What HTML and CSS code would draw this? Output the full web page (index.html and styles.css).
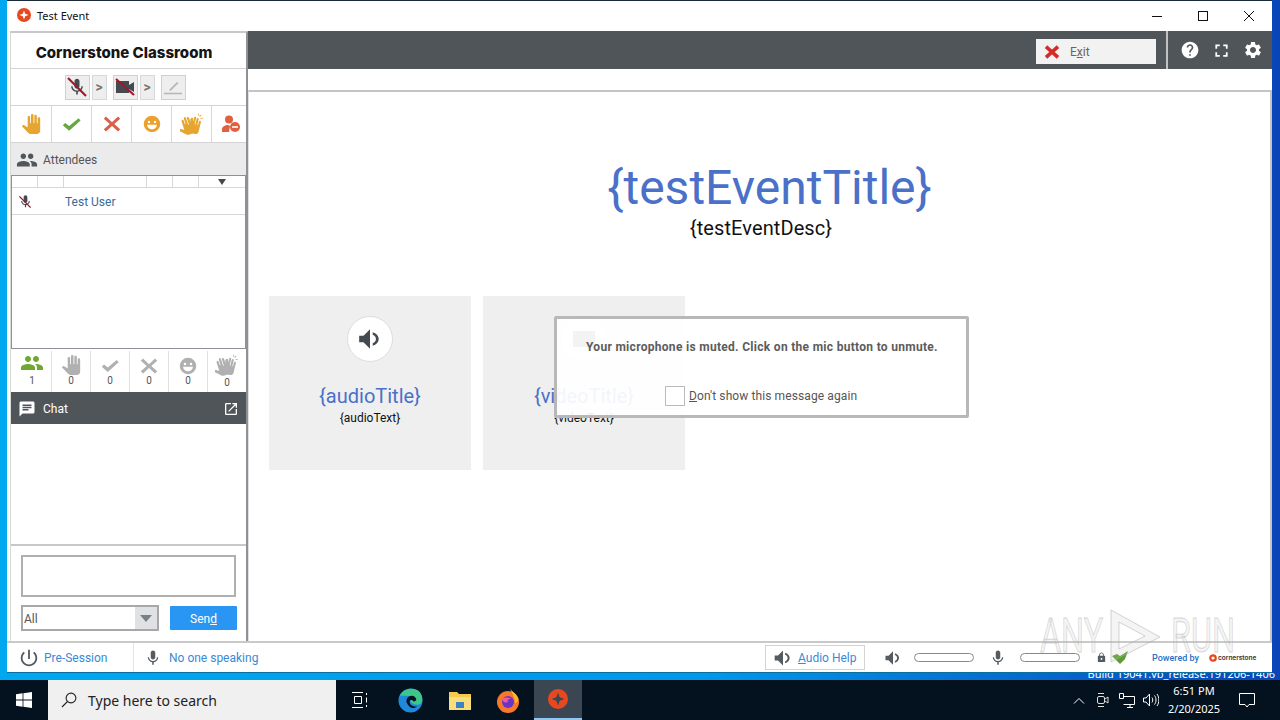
FILE: index.html
```html
<!DOCTYPE html>
<html lang="en">
<head>
	<meta charset="UTF-8">
	<title>Test Event</title>
	<link rel="stylesheet" href="styles.css">
</head>
<body>
<svg class="defs" width="0" height="0">
	<symbol id="i-hand" viewBox="0 0 24 24"><path d="M23 5.5V20c0 2.2-1.8 4-4 4h-7.3c-1.08 0-2.1-.43-2.85-1.19L1 14.83s1.26-1.23 1.3-1.25c.22-.19.49-.29.79-.29.22 0 .42.06.6.16.04.01 4.31 2.46 4.31 2.46V4c0-.83.67-1.5 1.5-1.5S11 3.17 11 4v7h1V1.5c0-.83.67-1.5 1.5-1.5S15 .67 15 1.5V11h1V2.5c0-.83.67-1.5 1.5-1.5s1.5.67 1.5 1.5V11h1V5.5c0-.83.67-1.5 1.5-1.5s1.5.67 1.5 1.5z"/></symbol>
	<symbol id="i-check" viewBox="0 0 24 24"><path d="M1 13l3-3 5 4L21 4l2.5 3L9 20z"/></symbol>
	<symbol id="i-cross" viewBox="0 0 24 24"><path d="M4 2l8 7.500L20 2l3 3-8 7 8 7-3 3-8-7.500L4 22l-3-3 8-7-8-7z"/></symbol>
	<symbol id="i-face" viewBox="0 0 24 24"><path fill-rule="evenodd" d="M12 1a11 11 0 1 0 0 22 11 11 0 0 0 0-22zM8 7.500a1.700 1.700 0 1 1 0 3.400 1.700 1.700 0 0 1 0-3.400zm8 0a1.700 1.700 0 1 1 0 3.400 1.700 1.700 0 0 1 0-3.400zM5.500 13h13c0 3.600-2.900 6-6.500 6s-6.500-2.400-6.500-6z"/></symbol>
	<symbol id="i-clap" viewBox="0 0 24 24"><g transform="translate(-2 4) rotate(-18 12 12) scale(.75)"><path d="M23 5.5V20c0 2.2-1.8 4-4 4h-7.3c-1.08 0-2.1-.43-2.85-1.19L1 14.83s1.26-1.23 1.3-1.25c.22-.19.49-.29.79-.29.22 0 .42.06.6.16.04.01 4.31 2.46 4.31 2.46V4c0-.83.67-1.5 1.5-1.5S11 3.17 11 4v7h1V1.5c0-.83.67-1.5 1.5-1.5S15 .67 15 1.500V11h1V2.500c0-.83.67-1.5 1.5-1.5s1.5.67 1.5 1.5V11h1V5.5c0-.83.67-1.5 1.5-1.5s1.5.67 1.5 1.5z"/></g><g transform="translate(3 5) rotate(14 12 12) scale(.7)"><path d="M23 5.5V20c0 2.2-1.8 4-4 4h-7.3c-1.08 0-2.1-.43-2.85-1.19L1 14.83s1.26-1.23 1.3-1.25c.22-.19.49-.29.79-.29.22 0 .42.06.6.16.04.01 4.31 2.46 4.31 2.46V4c0-.83.67-1.5 1.5-1.5S11 3.17 11 4v7h1V1.5c0-.83.67-1.5 1.5-1.5S15 .67 15 1.500V11h1V2.500c0-.83.67-1.5 1.5-1.5s1.5.67 1.5 1.5V11h1V5.5c0-.83.67-1.5 1.5-1.5s1.5.67 1.5 1.5z"/></g><path d="M18.500 1.500l1 2.500-.7.300-1-2.500zM21.500 3l-1.500 2-.6-.4 1.500-2zM23 6.500l-2.500.5-.1-.8 2.500-.5z"/></symbol>
	<symbol id="i-group" viewBox="0 0 24 24"><path d="M16 11c1.66 0 2.99-1.34 2.99-3S17.66 5 16 5c-1.66 0-3 1.34-3 3s1.34 3 3 3zm-8 0c1.66 0 2.99-1.34 2.99-3S9.66 5 8 5C6.34 5 5 6.34 5 8s1.34 3 3 3zm0 2c-2.33 0-7 1.17-7 3.5V19h14v-2.5c0-2.33-4.67-3.5-7-3.5zm8 0c-.29 0-.62.02-.97.05 1.16.84 1.97 1.97 1.97 3.45V19h6v-2.5c0-2.33-4.67-3.5-7-3.5z"/></symbol>
	<symbol id="i-mic" viewBox="0 0 24 24"><path d="M12 14c1.66 0 2.99-1.34 2.99-3L15 5c0-1.66-1.34-3-3-3S9 3.34 9 5v6c0 1.66 1.34 3 3 3zm5.3-3c0 3-2.54 5.1-5.3 5.1S6.7 14 6.7 11H5c0 3.41 2.72 6.23 6 6.72V21h2v-3.28c3.28-.48 6-3.3 6-6.72h-1.7z"/></symbol>
	<symbol id="i-sound" viewBox="0 0 24 24"><path d="M2 9v6h4l6 6V3L6 9H2zm12.500-3.200v2.300c1.900.8 3 2.200 3 3.900s-1.100 3.100-3 3.900v2.300c3.200-.9 5.500-3.300 5.500-6.200s-2.300-5.300-5.500-6.200z"/></symbol>
</svg>

<div class="desktop">
	<div class="window">
		<header class="titlebar">
			<svg class="app-logo" width="14" height="14" viewBox="0 0 14 14"><circle cx="7" cy="7" r="7" fill="#e8481f"/><path d="M7 2.500l1.200 3.300L11.500 7 8.200 8.200 7 11.500 5.800 8.200 2.500 7l3.300-1.200z" fill="#fff"/></svg>
			<span class="titlebar-text">Test Event</span>
			<div class="win-btns">
				<svg width="46" height="30" viewBox="0 0 46 30"><path d="M18 15.500h10" stroke="#111" fill="none"/></svg>
				<svg width="46" height="30" viewBox="0 0 46 30"><rect x="18.500" y="10.500" width="9" height="9" stroke="#111" fill="none"/></svg>
				<svg width="46" height="30" viewBox="0 0 46 30"><path d="M18 10l10 10M28 10L18 20" stroke="#111" fill="none"/></svg>
			</div>
		</header>

		<div class="main">
			<aside class="side">
				<div class="brand">Cornerstone Classroom</div>
				<div class="tools">
					<span class="tool">
						<svg class="ic-dark" width="20" height="20"><use href="#i-mic"/></svg>
						<svg class="slash" width="24" height="24" viewBox="0 0 24 24"><path d="M3 3l18 18"/></svg>
					</span>
					<span class="tool-arrow">&gt;</span>
					<span class="tool">
						<svg width="20" height="14" viewBox="0 0 20 14"><path d="M1 1h13v12H1zM14 5l5-3v10l-5-3z" fill="#444a50"/></svg>
						<svg class="slash" width="24" height="24" viewBox="0 0 24 24"><path d="M3 4l18 16"/></svg>
					</span>
					<span class="tool-arrow">&gt;</span>
					<span class="tool tool-off">
						<svg width="20" height="16" viewBox="0 0 20 16"><path d="M1 14.500h18" stroke="#b5b5b5" stroke-width="1.500"/><path d="M6 11l8-8 1.500 1-8 8z" fill="#b5b5b5"/></svg>
					</span>
				</div>
				<div class="reactions">
					<span><svg class="c-hand" width="20" height="20"><use href="#i-hand"/></svg></span>
					<span><svg class="c-check" width="19" height="19"><use href="#i-check"/></svg></span>
					<span><svg class="c-cross" width="18" height="18"><use href="#i-cross"/></svg></span>
					<span><svg class="c-face" width="18" height="18"><use href="#i-face"/></svg></span>
					<span><svg class="c-hand" width="24" height="24"><use href="#i-clap"/></svg></span>
					<span>
						<svg width="20" height="18" viewBox="0 0 20 18"><circle cx="8" cy="4.500" r="4" fill="#e0603f"/><path d="M1 17v-3c0-2 3-4 6-4l2 1-1 6z" fill="#e0603f"/><circle cx="14" cy="12" r="5" fill="#e0603f"/><path d="M11 12h6" stroke="#fff" stroke-width="1.600"/></svg>
					</span>
				</div>
				<div class="att-head">
					<svg width="22" height="22"><use href="#i-group"/></svg>
					<span>Attendees</span>
				</div>
				<div class="att-list">
					<div class="att-cols">
						<span></span><span></span><span></span><span></span><span></span>
						<span class="sort-cell"><i class="sort-arrow"></i></span>
					</div>
					<div class="att-row">
						<span class="att-mic">
							<svg class="ic-dark" width="15" height="15"><use href="#i-mic"/></svg>
							<svg class="slash" width="15" height="15" viewBox="0 0 24 24"><path d="M3 3l18 18"/></svg>
						</span>
						<span class="att-name">Test User</span>
					</div>
				</div>
				<div class="counts">
					<div><svg class="c-green" width="24" height="24"><use href="#i-group"/></svg><b>1</b></div>
					<div><svg class="c-gray" width="20" height="20"><use href="#i-hand"/></svg><b>0</b></div>
					<div><svg class="c-gray" width="18" height="18"><use href="#i-check"/></svg><b>0</b></div>
					<div><svg class="c-gray" width="18" height="18"><use href="#i-cross"/></svg><b>0</b></div>
					<div><svg class="c-gray" width="18" height="18"><use href="#i-face"/></svg><b>0</b></div>
					<div class="count-clap"><svg class="c-gray" width="24" height="24"><use href="#i-clap"/></svg><b>0</b></div>
				</div>
				<div class="chat-head">
					<svg width="18" height="18" viewBox="0 0 24 24" fill="#fff"><path d="M20 2H4c-1.1 0-2 .9-2 2v18l4-4h14c1.1 0 2-.9 2-2V4c0-1.1-.9-2-2-2zM6 9h12v2H6V9zm8 5H6v-2h8v2zm4-6H6V6h12v2z"/></svg>
					<span>Chat</span>
					<svg class="popout" width="16" height="16" viewBox="0 0 24 24" fill="#fff"><path d="M19 19H5V5h7V3H5c-1.11 0-2 .9-2 2v14c0 1.1.89 2 2 2h14c1.1 0 2-.9 2-2v-7h-2v7zM14 3v2h3.59l-9.83 9.83 1.41 1.41L19 6.41V10h2V3h-7z"/></svg>
				</div>
				<div class="chat-log"></div>
				<div class="chat-form">
					<div class="chat-input"></div>
					<div class="chat-send">
						<div class="select">
							<span>All</span>
							<i class="select-btn"><i class="sort-arrow"></i></i>
						</div>
						<div class="send">Sen<u>d</u></div>
					</div>
				</div>
			</aside>

			<section class="content">
				<div class="topbar">
					<div class="exit">
						<svg class="c-red" width="14" height="14"><use href="#i-cross"/></svg>
						<span>E<u>x</u>it</span>
					</div>
					<div class="top-icons">
						<svg width="20" height="20" viewBox="0 0 24 24"><path d="M12 2C6.48 2 2 6.48 2 12s4.48 10 10 10 10-4.48 10-10S17.52 2 12 2zm1 17h-2v-2h2v2zm2.07-7.75l-.9.92C13.45 12.9 13 13.5 13 15h-2v-.5c0-1.1.45-2.1 1.17-2.83l1.24-1.26c.37-.36.59-.86.59-1.41 0-1.1-.9-2-2-2s-2 .9-2 2H8c0-2.21 1.79-4 4-4s4 1.79 4 4c0 .88-.36 1.68-.93 2.25z"/></svg>
						<svg width="21" height="21" viewBox="0 0 24 24"><path d="M7 14H5v5h5v-2H7v-3zm-2-4h2V7h3V5H5v5zm12 7h-3v2h5v-5h-2v3zM14 5v2h3v3h2V5h-5z"/></svg>
						<svg width="20" height="20" viewBox="0 0 24 24"><path d="M19.14 12.94c.04-.3.06-.61.06-.94 0-.32-.02-.64-.07-.94l2.03-1.58c.18-.14.23-.41.12-.61l-1.92-3.32c-.12-.22-.37-.29-.59-.22l-2.39.96c-.5-.38-1.03-.7-1.62-.94l-.36-2.54c-.04-.24-.24-.41-.48-.41h-3.84c-.24 0-.43.17-.47.41l-.36 2.54c-.59.24-1.13.57-1.62.94l-2.39-.96c-.22-.08-.47 0-.59.22L2.74 8.87c-.12.21-.08.47.12.61l2.03 1.58c-.05.3-.09.63-.09.94s.02.64.07.94l-2.03 1.58c-.18.14-.23.41-.12.61l1.92 3.32c.12.22.37.29.59.22l2.39-.96c.5.38 1.03.7 1.62.94l.36 2.54c.05.24.24.41.48.41h3.84c.24 0 .44-.17.47-.41l.36-2.54c.59-.24 1.13-.56 1.62-.94l2.39.96c.22.08.47 0 .59-.22l1.92-3.32c.12-.22.07-.47-.12-.61l-2.01-1.58zM12 15.6c-1.98 0-3.6-1.62-3.6-3.6s1.62-3.6 3.6-3.6 3.6 1.62 3.6 3.6-1.62 3.6-3.6 3.6z"/></svg>
					</div>
				</div>
				<div class="stage">
					<h1 class="event-title">{testEventTitle}</h1>
					<p class="event-desc">{testEventDesc}</p>
					<div class="cards">
						<div class="card">
							<div class="card-icon"><svg class="ic-dark" width="26" height="26"><use href="#i-sound"/></svg></div>
							<div class="card-title">{audioTitle}</div>
							<div class="card-text">{audioText}</div>
						</div>
						<div class="card">
							<div class="card-icon"><i class="cam"></i></div>
							<div class="card-title">{videoTitle}</div>
							<div class="card-text">{videoText}</div>
						</div>
					</div>
					<div class="notice">
						<div class="notice-msg">Your microphone is muted. Click on the mic button to unmute.</div>
						<div class="notice-opt">
							<i class="notice-box"></i>
							<span><u>D</u>on't show this message again</span>
						</div>
					</div>
				</div>
			</section>
		</div>

		<footer class="status">
			<div class="st-session">
				<svg class="ic-gray" width="22" height="22" viewBox="0 0 24 24"><path d="M13 3h-2v10h2V3zm4.83 2.17l-1.42 1.42C17.99 7.86 19 9.81 19 12c0 3.87-3.13 7-7 7s-7-3.13-7-7c0-2.19 1.01-4.14 2.58-5.42L6.17 5.17C4.23 6.82 3 9.26 3 12c0 4.97 4.03 9 9 9s9-4.03 9-9c0-2.74-1.23-5.18-3.17-6.83z"/></svg>
				<span>Pre-Session</span>
			</div>
			<div class="st-speaking">
				<svg class="ic-gray" width="18" height="18"><use href="#i-mic"/></svg>
				<span>No one speaking</span>
			</div>
			<div class="st-right">
				<div class="audio-help">
					<svg class="ic-gray" width="20" height="20"><use href="#i-sound"/></svg>
					<span><u>A</u>udio Help</span>
				</div>
				<svg class="ic-gray st-vol" width="18" height="18"><use href="#i-sound"/></svg>
				<i class="meter"></i>
				<svg class="ic-gray st-mic" width="18" height="18"><use href="#i-mic"/></svg>
				<i class="meter"></i>
				<svg class="ic-gray st-lock" width="11" height="11" viewBox="0 0 24 24"><path d="M18 8h-1V6c0-2.76-2.24-5-5-5S7 3.24 7 6v2H6c-1.1 0-2 .9-2 2v10c0 1.1.9 2 2 2h12c1.1 0 2-.9 2-2V10c0-1.1-.9-2-2-2zm-6 9c-1.1 0-2-.9-2-2s.9-2 2-2 2 .9 2 2-.9 2-2 2zm3.1-9H8.9V6c0-1.71 1.39-3.1 3.1-3.1 1.71 0 3.1 1.39 3.1 3.1v2z"/></svg>
				<svg class="st-signal" width="16" height="13" viewBox="0 0 16 13"><path d="M0 5l5-2 3 2 8-5-3 8-5 5z" fill="#5a9e32"/></svg>
				<span class="powered">Powered by</span>
				<svg width="8" height="8" viewBox="0 0 10 10" class="cs-mark"><circle cx="5" cy="5" r="3.400" fill="none" stroke="#e8481f" stroke-width="2.800"/></svg>
				<span class="cs-name">cornerstone</span>
			</div>
		</footer>
	</div>

	<div class="build"><span>Build 19041.vb_release.191206-1406</span></div>

	<div class="watermark">
		<span class="wm-word">ANY</span>
		<svg width="55" height="56" viewBox="0 0 55 56"><path d="M3 2l49 27L3 54V2zM11 14v27l26-13z" fill="rgba(200,200,200,.2)" stroke="rgba(170,170,170,.5)"/></svg>
		<span class="wm-word">RUN</span>
	</div>

	<div class="taskbar">
		<div class="start">
			<svg width="16" height="16" viewBox="0 0 16 16" fill="#fff"><path d="M0 2.200l6.600-.9v6.300H0zM7.400 1.200L16 0v7.600H7.400zM0 8.400h6.600v6.300L0 13.800zM7.400 8.400H16V16l-8.600-1.200z"/></svg>
		</div>
		<div class="search">
			<svg width="16" height="16" viewBox="0 0 16 16" fill="none" stroke="#222" stroke-width="1.100"><circle cx="10" cy="6" r="4.900"/><path d="M6.500 9.500L1 15"/></svg>
			<span>Type here to search</span>
		</div>
		<div class="task-icon task-view">
			<svg width="16" height="16" viewBox="0 0 16 16" fill="none" stroke="#fff"><path d="M0 .5h11M0 15.500h11M2.500 4.500h7v7h-7zM14.500 1v2M14.500 5.500v5M14.500 13v2"/></svg>
		</div>
		<div class="task-icon task-edge">
			<svg width="25" height="25" viewBox="0 0 26 26"><circle cx="13" cy="13" r="12.500" fill="#1f88d8"/><path d="M2 8C5 1 14-1 20 2c4 2 6 7 5 12-1 3-4 4-8 3-3-1-4-2-4-4 0-1 1-2 2-3-2-2-8-2-13-2z" fill="#3cc68a"/><path d="M9 15c-1-4 2-7 5-7 3 0 5 2 5 4 0 1-1 2-3 2-1-2-3-2-4 0 0 3 3 6 8 5-3 3-8 3-11-4z" fill="#04111e"/></svg>
		</div>
		<div class="task-icon task-folder">
			<svg width="22" height="20" viewBox="0 0 22 20"><path d="M0 2h8l2 2h12v16H0z" fill="#f6c94f"/><path d="M0 7h22v13H0z" fill="#fbdd7c"/><path d="M7 12h8v6H7z" fill="#3b84c4"/></svg>
		</div>
		<div class="task-icon task-fox">
			<svg width="24" height="25" viewBox="0 0 24 25"><circle cx="12" cy="14" r="11" fill="#f7782b"/><path d="M14 0c1 3 6 5 8 10 1 3-1 5-3 5 0-6-3-9-5-15z" fill="#fbb62c"/><circle cx="12" cy="14" r="6" fill="#6a35c7"/><path d="M6 11c3-2 7-2 9 0-3 0-4 1-3 3-3 1-5 0-6-3z" fill="#f45a8d"/></svg>
		</div>
		<div class="task-icon task-active">
			<svg width="20" height="20" viewBox="0 0 14 14"><circle cx="7" cy="7" r="7" fill="#e8481f"/><path d="M7 2.500l1.200 3.300L11.500 7 8.200 8.200 7 11.500 5.800 8.200 2.500 7l3.300-1.200z" fill="#3a4652"/></svg>
		</div>
		<div class="tray">
			<span class="tray-icon"><svg width="12" height="7" viewBox="0 0 12 7" fill="none" stroke="#fff"><path d="M1 6.500l5-5 5 5"/></svg></span>
			<span class="tray-icon"><svg width="12" height="16" viewBox="0 0 12 16" fill="none" stroke="#ddd"><rect x=".5" y="4.500" width="7" height="7" rx="1.500"/><path d="M8 7l3-2v6l-3-2M1 1.500h6M1 14.500h6"/></svg></span>
			<span class="tray-icon"><svg width="16" height="15" viewBox="0 0 16 15" fill="none" stroke="#fff"><path d="M4.500 3.500h11v8h-11M8 14.500h6M11 11.500v3M.5.500h4v5h-4z"/></svg></span>
			<span class="tray-icon"><svg width="16" height="14" viewBox="0 0 16 14" fill="none" stroke="#fff"><path d="M.5 5h2.500l3.500-4v12L3 9H.5zM9 4.500c1 1.500 1 3.500 0 5M11.500 2.500c2 2.500 2 6.500 0 9M14 1c2.500 3.500 2.500 8.500 0 12"/></svg></span>
			<div class="clock"><span>6:51 PM</span><span>2/20/2025</span></div>
			<svg class="notif" width="16" height="15" viewBox="0 0 16 15" fill="none" stroke="#fff"><path d="M.5.500h15v11H10L8 14l-2-2.500H.5z"/></svg>
		</div>
	</div>
</div>
</body>
</html>
```

FILE: styles.css
```css
* {
	box-sizing: border-box;
}

html, body {
	margin: 0;
	height: 720px;
	overflow: hidden;
}

body {
	font-family: Roboto, "Liberation Sans", sans-serif;
	font-size: 12px;
	color: #333;
}

i {
	display: block;
	font-style: normal;
}

.defs {
	position: absolute;
}

.desktop {
	position: relative;
	height: 720px;
	display: flex;
	flex-direction: column;
	background: linear-gradient(90deg, #00a8f0 0%, #0098ea 55%, #0858c4 90%, #0a45b8 100%);
}

/* window */
.window {
	width: 1265px;
	height: 673px;
	margin-left: 7px;
	display: flex;
	flex-direction: column;
	flex: none;
	background: #fff;
	border-top: 1px solid #1b2a38;
	border-bottom: 1px solid #0a6f9e;
}

.titlebar {
	height: 30px;
	display: flex;
	align-items: center;
	padding-left: 10px;
	flex: none;
}

.app-logo {
	margin: 0 6px 2px 0;
}

.titlebar-text {
	font-family: "Noto Sans", sans-serif;
	font-size: 11px;
	color: #111;
	margin-bottom: 2px;
}

.win-btns {
	margin-left: auto;
	display: flex;
}

.win-btns svg {
	display: block;
}

.main {
	flex: 1;
	display: flex;
	min-height: 0;
	border-bottom: 2px solid #c9c9c9;
}

/* left column */
.side {
	width: 238px;
	margin-left: 3px;
	flex: none;
	display: flex;
	flex-direction: column;
	background: #fff;
	border-top: 2px solid #c8c8c8;
	border-right: 2px solid #8e9296;
	border-left: 1px solid #d8d8d8;
}

.brand {
	height: 36px;
	display: flex;
	align-items: center;
	justify-content: center;
	padding: 3px 9px 0 0;
	font-family: Inter, sans-serif;
	font-weight: 800;
	font-size: 15px;
	color: #151515;
	border-bottom: 1px solid #d4d4d4;
	flex: none;
}

.tools {
	height: 37px;
	display: flex;
	align-items: center;
	justify-content: center;
	gap: 2px;
	padding-right: 7px;
	border-bottom: 1px solid #d4d4d4;
	flex: none;
}

.tool {
	position: relative;
	width: 25px;
	height: 25px;
	display: flex;
	align-items: center;
	justify-content: center;
	background: #eee;
	border: 1px solid #d0d0d0;
}

.tool-arrow {
	width: 15px;
	height: 25px;
	display: flex;
	align-items: center;
	justify-content: center;
	background: #eee;
	border: 1px solid #d8d8d8;
	font-size: 14px;
	font-weight: 700;
	color: #777;
	margin-right: 4px;
}

.slash {
	position: absolute;
	left: 50%;
	top: 50%;
	transform: translate(-50%, -50%);
	fill: none;
	stroke: #a5162b;
	stroke-width: 2.2;
}

.ic-dark {
	fill: #444a50;
}

.ic-gray {
	fill: #555b60;
}

.reactions {
	height: 37px;
	display: grid;
	grid-template-columns: 41px 40px 40px 40px 40px 1fr;
	flex: none;
	border-bottom: 1px solid #d4d4d4;
}

.reactions span {
	display: flex;
	align-items: center;
	justify-content: center;
	border-right: 1px solid #d8d8d8;
}

.reactions span:last-child {
	border-right: 0;
	padding-left: 3px;
}

.c-hand { fill: #e6a52e; }
.c-check { fill: #66a83e; }
.c-cross { fill: #d9604c; }
.c-face { fill: #eba02c; }
.c-green { fill: #6fa82f; }
.c-gray { fill: #b0b0b0; }
.c-red { fill: #d42a2a; stroke: #d42a2a; stroke-width: 2; }

.att-head {
	height: 32px;
	display: flex;
	align-items: center;
	gap: 5px;
	padding: 1px 0 0 5px;
	background: #ebebeb;
	color: #555;
	flex: none;
}

.att-head svg {
	fill: #50565c;
}

.att-list {
	height: 174px;
	flex: none;
	border: 1px solid #8e9296;
	background: #fff;
}

.att-cols {
	height: 12px;
	display: grid;
	grid-template-columns: 26px 26px 83px 26px 26px 1fr;
	border-bottom: 1px solid #d8d8d8;
}

.att-cols span {
	border-right: 1px solid #d8d8d8;
}

.att-cols .sort-cell {
	border-right: 0;
	display: flex;
	align-items: center;
	justify-content: center;
}

.sort-arrow {
	width: 0;
	height: 0;
	border-left: 4px solid transparent;
	border-right: 4px solid transparent;
	border-top: 6px solid #444a50;
}

.att-row {
	height: 27px;
	padding-top: 1px;
	display: flex;
	align-items: center;
	border-bottom: 1px solid #d8d8d8;
}

.att-mic {
	position: relative;
	width: 26px;
	height: 15px;
	display: flex;
	justify-content: center;
	margin-right: 27px;
}

.att-name {
	color: #3a6a9c;
}

.counts {
	height: 41px;
	margin-top: 2px;
	padding-left: 2px;
	display: grid;
	grid-template-columns: repeat(5, 39px) 1fr;
	flex: none;
}

.counts div {
	display: flex;
	flex-direction: column;
	align-items: center;
	justify-content: flex-end;
	border-right: 1px solid #e0e0e0;
	padding-bottom: 7px;
}

.counts .count-clap {
	border-right: 0;
	padding-bottom: 5px;
}

.counts b {
	font-weight: 400;
	font-size: 10px;
	line-height: 12px;
	color: #555;
}

.chat-head {
	height: 32px;
	display: flex;
	align-items: center;
	gap: 7px;
	padding: 1px 7px 0;
	background: #50555a;
	color: #fff;
	flex: none;
}

.popout {
	margin-left: auto;
}

.chat-log {
	flex: 1;
	border-bottom: 2px solid #c8c8c8;
}

.chat-form {
	height: 95px;
	padding: 9px 10px 0;
	flex: none;
}

.chat-input {
	height: 42px;
	width: 215px;
	border: 2px solid #b0b0b0;
}

.chat-send {
	display: flex;
	margin-top: 8px;
	width: 216px;
	justify-content: space-between;
	align-items: center;
}

.select {
	width: 138px;
	height: 26px;
	display: flex;
	align-items: center;
	justify-content: space-between;
	border: 2px solid #a8a8a8;
	padding-left: 1px;
	color: #555;
}

.select span {
	padding-top: 1px;
}

.select-btn {
	width: 22px;
	height: 22px;
	display: flex;
	align-items: center;
	justify-content: center;
	background: #dfe1e4;
}

.select-btn .sort-arrow {
	border-left-width: 6px;
	border-right-width: 6px;
	border-top: 7px solid #77808a;
}

.send {
	width: 67px;
	height: 24px;
	padding-top: 1px;
	display: flex;
	align-items: center;
	justify-content: center;
	background: #2a96f3;
	color: #fff;
	border-radius: 1px;
}

/* right side */
.content {
	flex: 1;
	display: flex;
	flex-direction: column;
	min-width: 0;
}

.topbar {
	height: 38px;
	background: #50555a;
	display: flex;
	align-items: center;
	justify-content: flex-end;
	flex: none;
}

.exit {
	width: 120px;
	height: 25px;
	margin-top: 2px;
	background: #f2f2f2;
	display: flex;
	align-items: center;
	gap: 11px;
	padding: 1px 0 0 9px;
	color: #666;
}

.top-icons {
	height: 38px;
	margin-left: 10px;
	padding: 0 9px 0 12px;
	display: flex;
	align-items: center;
	gap: 11px;
	border-left: 2px solid #bfc1c3;
}

.top-icons svg {
	fill: #fff;
}

.stage {
	position: relative;
	flex: 1;
	margin-top: 21px;
	border-top: 2px solid #c4c4c4;
	border-right: 2px solid #c4c4c4;
	border-left: 1px solid #e0e0e0;
	padding: 0 20px;
}

.event-title {
	margin: 69px 0 0;
	width: 1001px;
	text-align: center;
	font-weight: 400;
	font-size: 48px;
	line-height: 54px;
	color: #4a70c8;
}

.event-desc {
	margin: 0;
	width: 984px;
	text-align: center;
	font-size: 20px;
	letter-spacing: .1px;
	line-height: 26px;
	color: #111;
}

.cards {
	display: flex;
	gap: 12px;
	margin-top: 55px;
}

.card {
	width: 202px;
	height: 174px;
	background: #efefef;
	display: flex;
	flex-direction: column;
	align-items: center;
	padding-top: 20px;
}

.card-icon {
	width: 46px;
	height: 46px;
	border-radius: 50%;
	background: #fff;
	border: 1px solid #ddd;
	display: flex;
	align-items: center;
	justify-content: center;
}

.cam {
	width: 22px;
	height: 16px;
	background: #555;
}

.card-title {
	margin-top: 21px;
	font-size: 20px;
	line-height: 26px;
	color: #4a70c8;
}

.card-text {
	margin-top: 1px;
	font-size: 12px;
	line-height: 16px;
	color: #111;
}

.notice {
	position: absolute;
	left: 305px;
	top: 224px;
	width: 415px;
	height: 102px;
	background: rgba(255, 255, 255, .93);
	border: 3px solid #b8b8b8;
	border-radius: 2px;
	padding: 20px 0 0 29px;
}

.notice-msg {
	font-weight: 700;
	font-size: 12px;
	letter-spacing: .3px;
	line-height: 16px;
	color: #5c5c5c;
}

.notice-opt {
	display: flex;
	align-items: center;
	gap: 4px;
	margin: 31px 0 0 79px;
	letter-spacing: .1px;
	color: #555;
}

.notice-box {
	width: 20px;
	height: 20px;
	background: #fff;
	border: 1px solid #bbb;
}

/* status bar */
.status {
	height: 29px;
	display: flex;
	align-items: center;
	flex: none;
	color: #3a8ad6;
}

.st-session {
	width: 116px;
	margin-left: 11px;
	display: flex;
	align-items: center;
	gap: 4px;
	height: 100%;
	border-right: 1px solid #e4e4e4;
}

.st-speaking {
	display: flex;
	align-items: center;
	gap: 7px;
	margin-left: 10px;
}

.st-right {
	margin-left: auto;
	display: flex;
	align-items: center;
	padding-right: 17px;
}

.audio-help {
	width: 100px;
	height: 25px;
	display: flex;
	align-items: center;
	gap: 5px;
	padding-left: 7px;
	border: 1px solid #d4d4d4;
	margin-right: 19px;
}

.meter {
	width: 60px;
	height: 9px;
	border: 1px solid #888;
	border-radius: 5px;
}

.st-vol {
	margin-right: 12px;
}

.st-mic {
	margin: 0 13px 0 15px;
}

.st-lock {
	margin-left: 16px;
}

.st-signal {
	margin-left: 5px;
}

.powered {
	margin-left: 24px;
	width: 48px;
	white-space: nowrap;
	font-size: 9px;
	font-weight: 500;
	color: #2a70c8;
}

.cs-mark {
	margin: 0 1px 0 9px;
}

.cs-name {
	font-family: Inter, sans-serif;
	width: 37px;
	white-space: nowrap;
	font-size: 6.5px;
	font-weight: 600;
	color: #333;
}

.build {
	height: 7px;
	overflow: hidden;
	text-align: right;
	padding-right: 5px;
	font-family: "Noto Sans", sans-serif;
	font-size: 11px;
	line-height: 1px;
	color: #fff;
	flex: none;
	white-space: nowrap;
}

.watermark {
	position: absolute;
	left: 1040px;
	top: 608px;
	display: flex;
	align-items: center;
	gap: 8px;
	font-size: 49px;
	line-height: 56px;
	color: rgba(200, 200, 200, .2);
	-webkit-text-stroke: 1px rgba(170, 170, 170, .45);
}

.wm-word {
	width: 60px;
	white-space: nowrap;
	transform: scaleX(.66);
	transform-origin: left center;
}

/* taskbar */
.taskbar {
	height: 40px;
	flex: none;
	display: flex;
	align-items: center;
	background: #04111e;
	color: #fff;
}

.start {
	width: 48px;
	height: 100%;
	display: flex;
	align-items: center;
	justify-content: center;
}

.search {
	width: 288px;
	height: 100%;
	background: #f0f0f0;
	display: flex;
	align-items: center;
	gap: 11px;
	padding-left: 13px;
	color: #222;
	font-family: "Noto Sans", sans-serif;
	font-size: 14px;
}

.task-icon {
	height: 100%;
	display: flex;
	align-items: center;
	justify-content: center;
}

.task-view { width: 48px; }
.task-edge { width: 53px; }
.task-folder { width: 45px; }
.task-fox { width: 52px; }

.task-active {
	width: 48px;
	background: #3a4652;
	border-bottom: 2px solid #8ec8f0;
}

.tray {
	margin-left: auto;
	display: flex;
	align-items: center;
	padding-right: 25px;
}

.tray-icon {
	width: 24px;
	display: flex;
	justify-content: center;
}

.clock {
	display: flex;
	flex-direction: column;
	align-items: center;
	font-family: "Noto Sans", sans-serif;
	font-size: 11px;
	line-height: 18px;
	width: 66px;
	margin-left: -2px;
}

.notif {
	margin-left: 12px;
}
```
